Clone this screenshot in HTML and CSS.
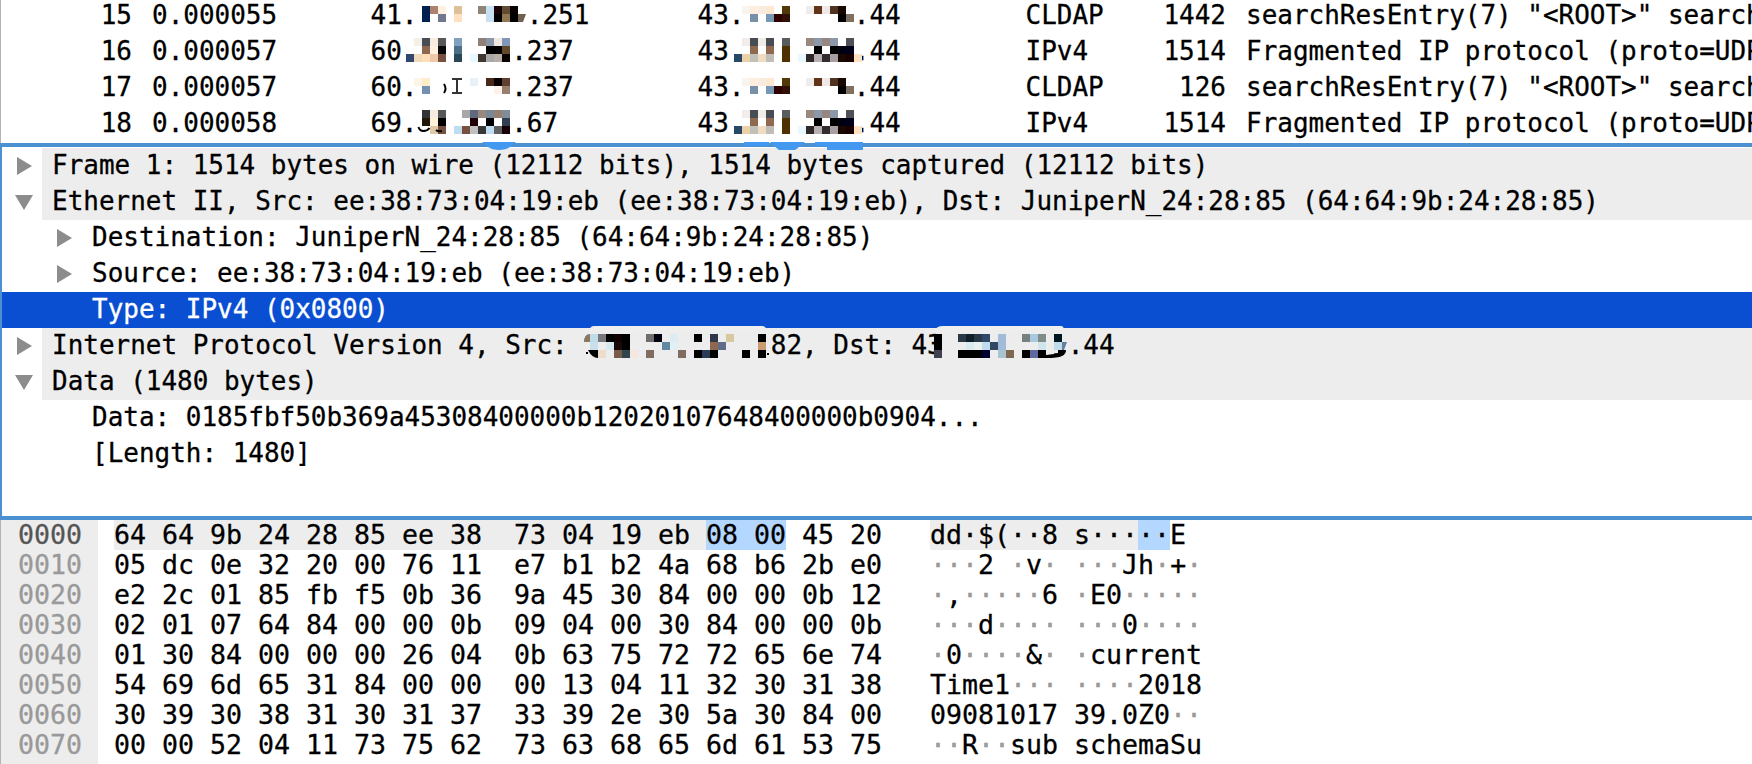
FILE: index.html
```
<!DOCTYPE html>
<html lang="en">
<head>
  <meta charset="UTF-8">
  <meta name="viewport" content="width=device-width, initial-scale=1.0">
  <title>Packet capture</title>
  <link rel="stylesheet" href="styles.css">
</head>

<body>
  <div class="window">
    <div class="packet-list">
      <div class="packet">
        <span class="no">15</span><span class="time">0.000055</span><span class="source">41.       .251</span><span class="dest">43.       .44</span><span class="proto">CLDAP</span><span class="length">1442</span><span class="info">searchResEntry(7) "&lt;ROOT&gt;" search</span>
      </div>
      <div class="packet">
        <span class="no">16</span><span class="time">0.000057</span><span class="source">60.      .237</span><span class="dest">43.       .44</span><span class="proto">IPv4</span><span class="length">1514</span><span class="info">Fragmented IP protocol (proto=UDP</span>
      </div>
      <div class="packet">
        <span class="no">17</span><span class="time">0.000057</span><span class="source">60.      .237</span><span class="dest">43.       .44</span><span class="proto">CLDAP</span><span class="length">126</span><span class="info">searchResEntry(7) "&lt;ROOT&gt;" search</span>
      </div>
      <div class="packet">
        <span class="no">18</span><span class="time">0.000058</span><span class="source">69.      .67</span><span class="dest">43.       .44</span><span class="proto">IPv4</span><span class="length">1514</span><span class="info">Fragmented IP protocol (proto=UDP</span>
      </div>
    </div>

    <div class="details">
      <div class="node"><span class="toggle"><i class="closed"></i></span><span class="label">Frame 1: 1514 bytes on wire (12112 bits), 1514 bytes captured (12112 bits)</span></div>
      <div class="node"><span class="toggle"><i class="open"></i></span><span class="label">Ethernet II, Src: ee:38:73:04:19:eb (ee:38:73:04:19:eb), Dst: JuniperN_24:28:85 (64:64:9b:24:28:85)</span></div>
      <div class="node child"><span class="toggle"><i class="closed"></i></span><span class="label">Destination: JuniperN_24:28:85 (64:64:9b:24:28:85)</span></div>
      <div class="node child"><span class="toggle"><i class="closed"></i></span><span class="label">Source: ee:38:73:04:19:eb (ee:38:73:04:19:eb)</span></div>
      <div class="node child selected"><span class="toggle"></span><span class="label">Type: IPv4 (0x0800)</span></div>
      <div class="node"><span class="toggle"><i class="closed"></i></span><span class="label">Internet Protocol Version 4, Src:             82, Dst: 43        .44</span></div>
      <div class="node"><span class="toggle"><i class="open"></i></span><span class="label">Data (1480 bytes)</span></div>
      <div class="node child"><span class="toggle"></span><span class="label">Data: 0185fbf50b369a45308400000b12020107648400000b0904...</span></div>
      <div class="node child"><span class="toggle"></span><span class="label">[Length: 1480]</span></div>
    </div>

    <div class="bytes">
      <div class="offsets">
        <div class="current">0000</div>
        <div>0010</div>
        <div>0020</div>
        <div>0030</div>
        <div>0040</div>
        <div>0050</div>
        <div>0060</div>
        <div>0070</div>
      </div>
      <div class="hex">
        <div><span class="layer">64 64 9b 24 28 85 ee 38  73 04 19 eb </span><span class="field">08 00</span> 45 20</div>
        <div>05 dc 0e 32 20 00 76 11  e7 b1 b2 4a 68 b6 2b e0</div>
        <div>e2 2c 01 85 fb f5 0b 36  9a 45 30 84 00 00 0b 12</div>
        <div>02 01 07 64 84 00 00 0b  09 04 00 30 84 00 00 0b</div>
        <div>01 30 84 00 00 00 26 04  0b 63 75 72 72 65 6e 74</div>
        <div>54 69 6d 65 31 84 00 00  00 13 04 11 32 30 31 38</div>
        <div>30 39 30 38 31 30 31 37  33 39 2e 30 5a 30 84 00</div>
        <div>00 00 52 04 11 73 75 62  73 63 68 65 6d 61 53 75</div>
      </div>
      <div class="ascii">
        <div><span class="layer">dd·$(··8 s···</span><span class="field">··</span>E</div>
        <div><i>···</i>2 <i>·</i>v<i>·</i> <i>···</i>Jh<i>·</i>+<i>·</i></div>
        <div><i>·</i>,<i>·····</i>6 <i>·</i>E0<i>·····</i></div>
        <div><i>···</i>d<i>····</i> <i>···</i>0<i>····</i></div>
        <div><i>·</i>0<i>····</i>&amp;<i>·</i> <i>·</i>current</div>
        <div>Time1<i>···</i> <i>····</i>2018</div>
        <div>09081017 39.0Z0<i>··</i></div>
        <div><i>··</i>R<i>··</i>sub schemaSu</div>
      </div>
    </div>

    <!-- pixelated blocks over the hidden parts of the addresses -->
    <svg class="mosaic" width="1752" height="764" viewBox="0 0 1752 764">
      <g fill="#4399f0">
        <path d="M482 142h34l-6 5q-4 3-11 3t-11-3z"/>
        <path d="M744 142h25v4h-25z"/>
        <path d="M770 142h35l-6 5-4 3h-16l-5-4z"/>
        <path d="M815 142h48v8h-36v-4h-12z"/>
      </g>
      <path fill="#eeeeef" d="M589 331q1-5 5-5h168q4 0 5 5z"/>
      <path fill="#eeeeef" d="M935 331q1-5 8-5h118q3 0 3 5z"/>
      <g id="blocks" shape-rendering="crispEdges"></g>
      <!-- what is left of the glyphs round the blocks -->
      <path fill="none" stroke="#000" stroke-width="2" d="M444 84q3 5 0 9"/>
      <path fill="none" stroke="#333" stroke-width="2" d="M452 79h10M457 79v14M452 93h10"/>
      <path fill="none" stroke="#000" stroke-width="2" d="M418.500 127q1 4 5 4 4 0 6-3M436 130q2 2 6 1"/>
      <path fill="#706050" d="M518 14h8l-3 8h-5z"/>
      <path fill="#887860" d="M584 342q0-8 6-8v8z"/>
      <path fill="#000" d="M586 352h2v2h-2zM588 350h10v8q-6 0-10-8zM767 353h2v2h-2z"/>
      <path fill="#6080a0" d="M1062 342h5l-3 8h-2z"/>
      <path fill="#000" d="M1038 350h8v8h-8zM1046 355l8-1v-4h12q0 4-4 6-4 2-16 2z"/>
      <path fill="#ededed" d="M1046 350h12v3l-12 1z"/>
    </svg>
  </div>

  <script>
    // every block is 8px, a dash leaves a hole
    const SIZE = 8;
    const blocks = document.getElementById('blocks');

    function drawRow(x, y, colors) {
      colors.split(' ').forEach((color, i) => {
        if (color === '-') return;
        const rect = document.createElementNS('http://www.w3.org/2000/svg', 'rect');
        rect.setAttribute('x', x + i * SIZE);
        rect.setAttribute('y', y);
        rect.setAttribute('width', SIZE);
        rect.setAttribute('height', SIZE);
        rect.setAttribute('fill', '#' + color);
        blocks.appendChild(rect);
      });
    }

    // source column
    drawRow(406, 6, '- - 002050 ae8070 fff0e0 - e0c098 - - 908478 c8e0f4 180404 604c30 080000');
    drawRow(406, 14, '- - 002050 - 707890 - ffe0c0 - - - c8e0f4 000000 907850 000000');
    drawRow(406, 38, '- f4f0e8 484c54 f8ece0 585858 - 80a0c0 - - 908078 8898a8 f0e8e0 8098b8');
    drawRow(406, 46, '- - 906850 fff0e0 080808 - 4c7088 - - - 000000 000000 604828');
    drawRow(406, 54, '304870 f0dcb8 ffe0b8 f0c8a8 785040 - 284858 - e8f8ff 403830 a8a8a8 b8b0a8 080000');
    drawRow(406, 78, '- fff4e8 ffecc8 - - - - - e8f0f8 - 482818 080000 604030');
    drawRow(406, 86, '- - 7890b0 - - - - - - - - fff0e8 988070');
    drawRow(406, 110, '- - 303438 f4ece0 585858 - - a8a8a8 606880 988880 788898 988070 808c98');
    drawRow(406, 118, '- - 201808 fff0d8 000000 - - - 200008 - 000000 - 304050');
    drawRow(406, 126, '- - - e0c8a8 785040 - c0dcf0 785040 c0c0c0 383838 c0dcf0 606060 180008');

    // destination column, the same two addresses twice
    for (const top of [0, 72]) {
      drawRow(742, top + 6, 'f8f4f0 ffeedd f8ece0 ffe8d0 - 503808 - - f0ecec 603418 f0e8e8 503420 180800');
      drawRow(742, top + 14, '- 7890a8 - 7898b8 300000 301008 - - - - - - 000000 807060');
      drawRow(734, top + 38, '- f4ece8 484c54 f0ece8 484c54 - 585c5c - - 988880 8c98a8 988480 8c98a8 - 505058');
      drawRow(734, top + 46, '- - 906850 - 906850 - 503000 - - - 000000 - 000000 000010 000018');
      drawRow(734, top + 54, '284868 ecd0a8 c0c0b8 f0dcc0 c0bcb8 - 503000 - e8f8ff 302828 b8b0b0 302c30 a8a0a0 180800 180000 ffe0c0');
    }

    // details, Src
    drawRow(590, 334, 'c0dce8 78787c 000000 100000 000000 - - 706c70 000010 - dcecf0 - - 000000 - 303848 - d8c8a0 - - - 000000');
    drawRow(590, 342, 'c8e0ec - d8e8f0 180808 000000 - - - - 6088a0 e0f0f4 - - - - 906850 606c88 - - - - c89c70');
    drawRow(590, 350, '- ecdccc - 785c48 304450 f4e8dc - 806c60 - - - 806c60 - 000000 283c58 000000 - - - 000000 - 000000');

    // details, Dst
    drawRow(934, 334, '000000 - - 283848 102028 283848 304868 - a0bcd8 - - 78807f a8c8e0 808c88 - 001820');
    drawRow(934, 342, '000000 - - - d8ecf0 e8f0f0 c0dcec 304860 a0bcd8 - - - - d0e4ec - c0dcec');
    drawRow(934, 350, '404050 - - 000000 000000 000000 000030 - a8c4d0 806850 - 000000 6068a0');
  </script>
</body>

</html>
```
FILE: styles.css
```
body {
  margin: 0;
  background: #fff;
  font-family: "DejaVu Sans Mono", monospace;
  font-size: 25.96px;
  color: #000;
  overflow: hidden;
  -webkit-text-stroke: 0.3px;
}

.window {
  position: relative;
  display: flex;
  flex-direction: column;
  width: 1752px;
  height: 764px;
  overflow: hidden;
}

/* packet list */

.packet-list {
  flex: none;
  box-sizing: border-box;
  height: 143px;
  border-left: 1px solid #b4b4b4;
}

.packet {
  display: grid;
  grid-template-columns: 131px 219px 327px 328px 121px 99px 1fr;
  height: 36px;
  line-height: 35px;
  white-space: pre;
}

.packet:first-child {
  margin-top: -2px;
}

.no,
.length {
  text-align: right;
}

.time,
.info {
  padding-left: 20px;
}

.source,
.dest,
.proto {
  padding-left: 19.5px;
}

/* details tree */

.details {
  flex: none;
  box-sizing: border-box;
  height: 377px;
  padding-top: 1px;
  border: solid #4b91d1;
  border-width: 4px 0 4px 2px;
}

.node {
  display: flex;
  height: 36px;
  line-height: 35px;
}

.toggle {
  display: flex;
  align-items: center;
  justify-content: center;
  width: 40px;
}

.label {
  flex: 1;
  padding-left: 10px;
  background: #ededed;
  white-space: pre;
}

.child .toggle {
  padding-left: 40px;
}

.child .label {
  background: none;
}

.selected {
  background: #0a4fd1;
  color: #fff;
}

.closed {
  margin-left: 4px;
  border: solid transparent;
  border-width: 9px 0 9px 15px;
  border-left-color: #8c8c8c;
}

.open {
  margin-left: 4px;
  border: solid transparent;
  border-width: 15px 9px 0;
  border-top-color: #8c8c8c;
}

/* packet bytes */

.bytes {
  flex: 1;
  display: flex;
  border-left: 1px solid #b4b4b4;
  font-size: 26.58px;
  line-height: 30px;
}

.bytes div div {
  height: 30px;
  white-space: pre;
}

.offsets {
  width: 80px;
  padding-left: 17px;
  background: #ededed;
  color: #999;
}

.current {
  color: #555;
}

.hex {
  width: 816px;
  padding-left: 16px;
}

.ascii i {
  font-style: normal;
  color: #999;
}

.layer,
.field {
  display: inline-block;
  height: 30px;
  background: #ededed;
}

.field {
  background: #b4d7ff;
}

.mosaic {
  position: absolute;
  top: 0;
  left: 0;
}
```
